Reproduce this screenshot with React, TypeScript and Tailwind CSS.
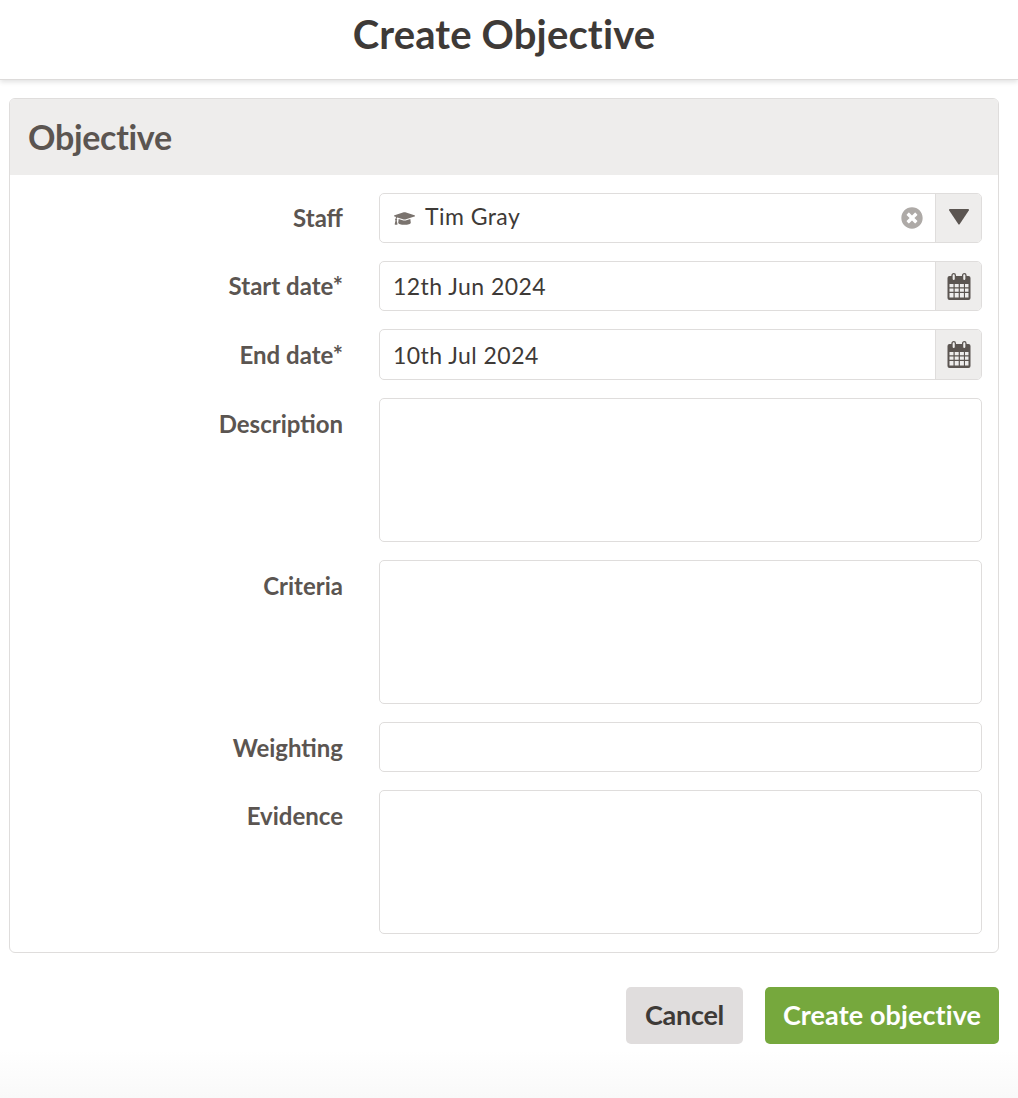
import { FaGraduationCap, FaTimesCircle } from "react-icons/fa";

const labelClass =
  "text-right text-[24px] leading-[30px] font-bold tracking-[0px] text-[#5b5551]";
const fieldClass = "rounded-[5px] border border-[#dfdddc] bg-white";

function CalendarIcon() {
  return (
    <svg width="24" height="27" viewBox="0 0 24 27" className="text-[#5b5551]">
      <rect x="0.500" y="3" width="23" height="24" rx="2" fill="currentColor" />
      <rect x="5" y="0.700" width="3.400" height="7" rx="1.700" fill="#eeedec" stroke="currentColor" strokeWidth="1.300" />
      <rect x="15.600" y="0.700" width="3.400" height="7" rx="1.700" fill="#eeedec" stroke="currentColor" strokeWidth="1.300" />
      <path
        fill="#eeedec"
        d="M2.500 11h4v3.200h-4zM7.700 11h4v3.200h-4zM12.900 11h4v3.200h-4zM18 11h3.500v3.200H18zM2.500 15.400h4v3.400h-4zM7.700 15.400h4v3.400h-4zM12.900 15.400h4v3.400h-4zM18 15.400h3.500v3.400H18zM2.500 20h4v4.500h-4zM7.700 20h4v4.500h-4zM12.900 20h4v4.500h-4zM18 20h3.500v4.500H18z"
      />
    </svg>
  );
}

function DateField({ value, tall }: { value: string; tall?: boolean }) {
  return (
    <div className={`flex overflow-hidden ${tall ? "h-[51px]" : "h-[50px]"} ${fieldClass}`}>
      <div className={`flex flex-1 items-center pl-[13px] text-[23px] tracking-[0.45px] text-[#3e3a37] ${tall ? "pt-px" : ""}`}>
        {value}
      </div>
      <div className="flex w-[46px] items-center justify-center border-l border-[#dfdddc] bg-[#eeedec]">
        <CalendarIcon />
      </div>
    </div>
  );
}

function Row({ label, first, children }: { label: string; first?: boolean; children: React.ReactNode }) {
  return (
    <div className="grid grid-cols-[333px_603px] gap-x-[36px]">
      <div className={`${labelClass} ${first ? "pt-[10px]" : "pt-[11px]"}`}>{label}</div>
      {children}
    </div>
  );
}

export default function App() {
  return (
    <div className="h-[1098px] overflow-hidden bg-[linear-gradient(to_bottom,#fff_1050px,#f9f9f9_1098px)] font-['Lato','Noto_Sans',sans-serif]">
      {/* Title bar */}
      <header className="flex h-[80px] items-center justify-center border-b border-[#dddbda] bg-white pr-[10px] pb-3 shadow-[0_2px_5px_rgba(0,0,0,0.12)]">
        <h1 className="text-[40px] leading-none font-bold tracking-[0.15px] text-[#3e3a37]">
          Create Objective
        </h1>
      </header>

      <main className="pt-[18px] pr-[19px] pl-[9px]">
        <section className="h-[855px] overflow-hidden rounded-[6px] border border-[#dfdddc] bg-white">
          <div className="flex h-[76px] items-center bg-[#eeedec] pl-[18px]">
            <h2 className="text-[34px] leading-none font-bold tracking-[-0.3px] text-[#5b5551]">Objective</h2>
          </div>

          <div className="flex flex-col gap-[18px] pt-[18px]">
            <Row label="Staff" first>
              <div className={`flex h-[50px] overflow-hidden ${fieldClass}`}>
                <div className="flex flex-1 items-center pl-[14px]">
                  <FaGraduationCap className="text-[21px] text-[#7a736e]" />
                  <span className="mb-[3px] ml-[10px] text-[23px] tracking-[0.45px] text-[#3e3a37]">Tim Gray</span>
                  <FaTimesCircle className="mr-[12px] ml-auto text-[22px] text-[#aeaaa7]" />
                </div>
                <div className="flex w-[46px] items-center justify-center border-l border-[#dfdddc] bg-[#eeedec]">
                  <svg width="20" height="16" viewBox="0 0 20 16" className="mb-[2px] text-[#5b5551]">
                    <path fill="currentColor" d="M1 0h18a1 1 0 0 1 .8 1.500L10.800 15a1 1 0 0 1-1.600 0L.2 1.500A1 1 0 0 1 1 0z" />
                  </svg>
                </div>
              </div>
            </Row>
            <Row label="Start date*" first>
              <DateField value="12th Jun 2024" />
            </Row>
            <Row label="End date*">
              <DateField value="10th Jul 2024" tall />
            </Row>
            <Row label="Description">
              <div className={`h-[144px] ${fieldClass}`} />
            </Row>
            <Row label="Criteria">
              <div className={`h-[144px] ${fieldClass}`} />
            </Row>
            <Row label="Weighting">
              <div className={`h-[50px] ${fieldClass}`} />
            </Row>
            <Row label="Evidence">
              <div className={`h-[144px] ${fieldClass}`} />
            </Row>
          </div>
        </section>

        {/* Actions */}
        <div className="mt-[34px] flex justify-end gap-[22px]">
          <button className="h-[57px] w-[117px] rounded-[5px] bg-[#e0dddd] text-[27px] font-bold tracking-[-0.25px] text-[#3e3a37]">
            Cancel
          </button>
          <button className="h-[57px] w-[234px] rounded-[5px] bg-[#76a83d] text-[27px] font-bold tracking-[0.1px] text-white">
            Create objective
          </button>
        </div>
      </main>
    </div>
  );
}
